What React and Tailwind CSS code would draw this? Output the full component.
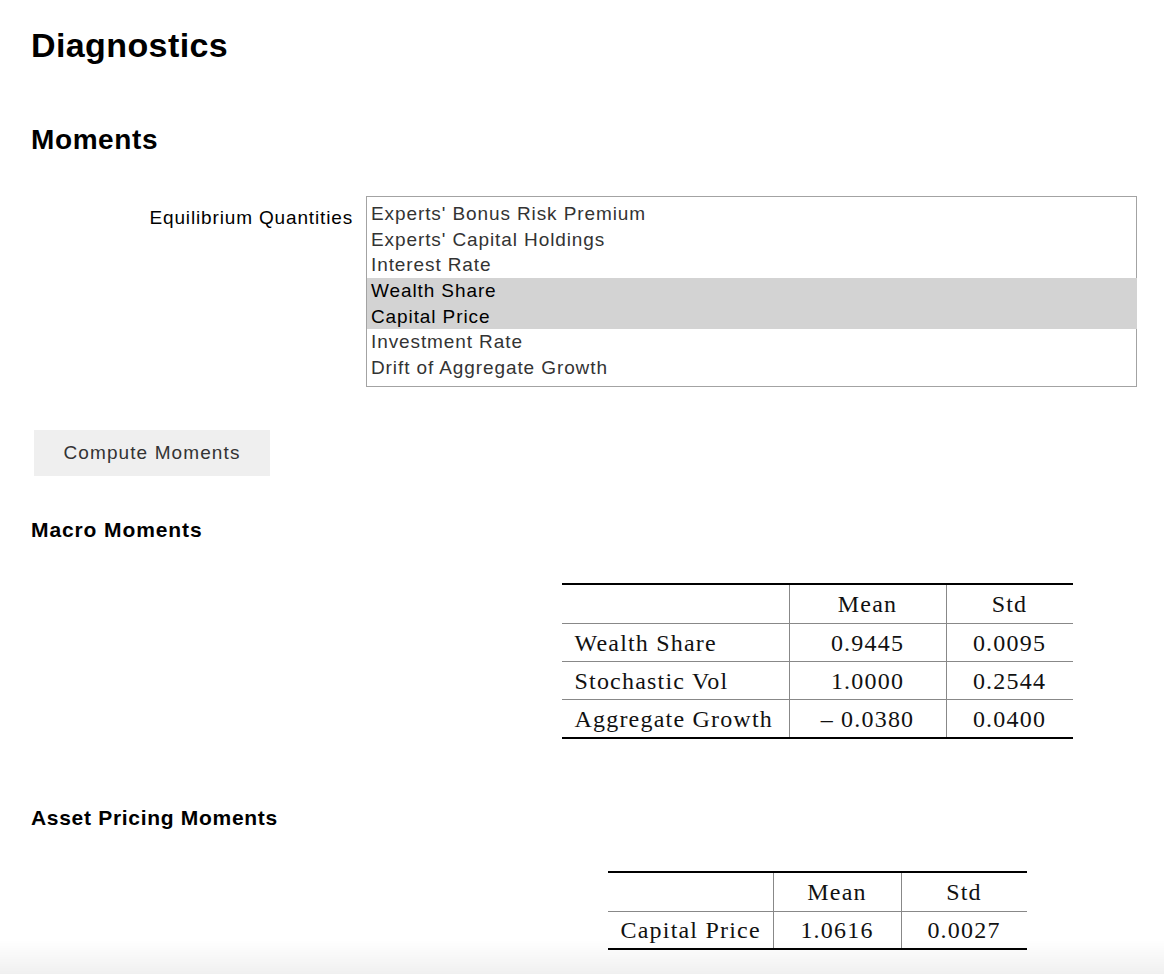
import React, { useState } from "react";

const quantities = [
  "Experts' Bonus Risk Premium",
  "Experts' Capital Holdings",
  "Interest Rate",
  "Wealth Share",
  "Capital Price",
  "Investment Rate",
  "Drift of Aggregate Growth",
  "Vol of Aggregate Growth",
];

const macroRows = [
  { name: "Wealth Share", mean: "0.9445", std: "0.0095" },
  { name: "Stochastic Vol", mean: "1.0000", std: "0.2544" },
  { name: "Aggregate Growth", mean: "\u2013 0.0380", std: "0.0400" },
];

const pricingRows = [{ name: "Capital Price", mean: "1.0616", std: "0.0027" }];

function MomentsTable({ rows, cols, rowHeight }) {
  return (
    <div className="border-t-2 border-b-2 border-black font-['Liberation_Serif','Times_New_Roman',serif] text-[24px] tracking-[1.2px] text-[#111]">
      <div className="flex h-[38px]">
        <div className={cols[0]}></div>
        <div className={`${cols[1]} flex items-center justify-center border-l border-[#888]`}>Mean</div>
        <div className={`${cols[2]} flex items-center justify-center border-l border-[#888]`}>Std</div>
      </div>
      {rows.map((row) => (
        <div key={row.name} className={`flex ${rowHeight} border-t border-[#888]`}>
          <div className={`${cols[0]} flex items-center pl-[13px] whitespace-nowrap`}>{row.name}</div>
          <div className={`${cols[1]} flex items-center justify-center border-l border-[#888]`}>{row.mean}</div>
          <div className={`${cols[2]} flex items-center justify-center border-l border-[#888]`}>{row.std}</div>
        </div>
      ))}
    </div>
  );
}

export default function App() {
  const [selected, setSelected] = useState(["Wealth Share", "Capital Price"]);

  const toggle = (q) => {
    setSelected((prev) => (prev.includes(q) ? prev.filter((x) => x !== q) : [...prev, q]));
  };

  return (
    <div className="min-h-[974px] bg-white font-['Liberation_Sans',Arial,sans-serif] text-black">
      <div className="pl-[31px] pt-[25px]">
        <h1 className="text-[34px] leading-[40px] font-bold tracking-[0.4px]">Diagnostics</h1>
        <h2 className="mt-[59px] text-[28px] leading-[32px] font-bold tracking-[0.6px]">Moments</h2>
      </div>

      <div className="mt-[40px] flex items-start">
        <label className="mt-[9px] w-[366px] pr-[13px] text-right text-[19px] leading-[26px] tracking-[0.85px]">
          Equilibrium Quantities
        </label>
        <div className="h-[191px] w-[771px] border border-[#a3a3a3] pt-[4px]">
          <div className="-mr-px h-[185px] overflow-hidden">
            {quantities.map((q) => {
              const isSel = selected.includes(q);
              return (
                <div
                  key={q}
                  onClick={() => toggle(q)}
                  className={`h-[25.7px] cursor-default whitespace-nowrap pl-[4px] text-[19px] leading-[25.7px] tracking-[0.9px] ${
                    isSel ? "bg-[#d3d3d3] text-black" : "text-[#333]"
                  }`}
                >
                  {q}
                </div>
              );
            })}
          </div>
        </div>
      </div>

      <div className="pl-[34px] mt-[43px]">
        <button className="h-[46px] w-[236px] bg-[#efefef] text-[19px] tracking-[1.1px] text-[#333]">
          Compute Moments
        </button>
      </div>

      <h3 className="mt-[42px] pl-[31px] text-[21px] leading-[24px] font-bold tracking-[0.9px]">Macro Moments</h3>

      <div className="mt-[41px] flex justify-center pl-[470px]">
        <MomentsTable rows={macroRows} cols={["w-[227px]", "w-[157px]", "w-[127px]"]} rowHeight="h-[38px]" />
      </div>

      <h3 className="mt-[67px] pl-[31px] text-[21px] leading-[24px] font-bold tracking-[0.7px]">Asset Pricing Moments</h3>

      <div className="mt-[41px] flex justify-center pl-[470px]">
        <MomentsTable rows={pricingRows} cols={["w-[165px]", "w-[128px]", "w-[126px]"]} rowHeight="h-[37px]" />
      </div>

      <div className="pointer-events-none fixed inset-x-0 bottom-0 h-[34px] bg-linear-to-b from-transparent to-[#0000000f]"></div>
    </div>
  );
}
